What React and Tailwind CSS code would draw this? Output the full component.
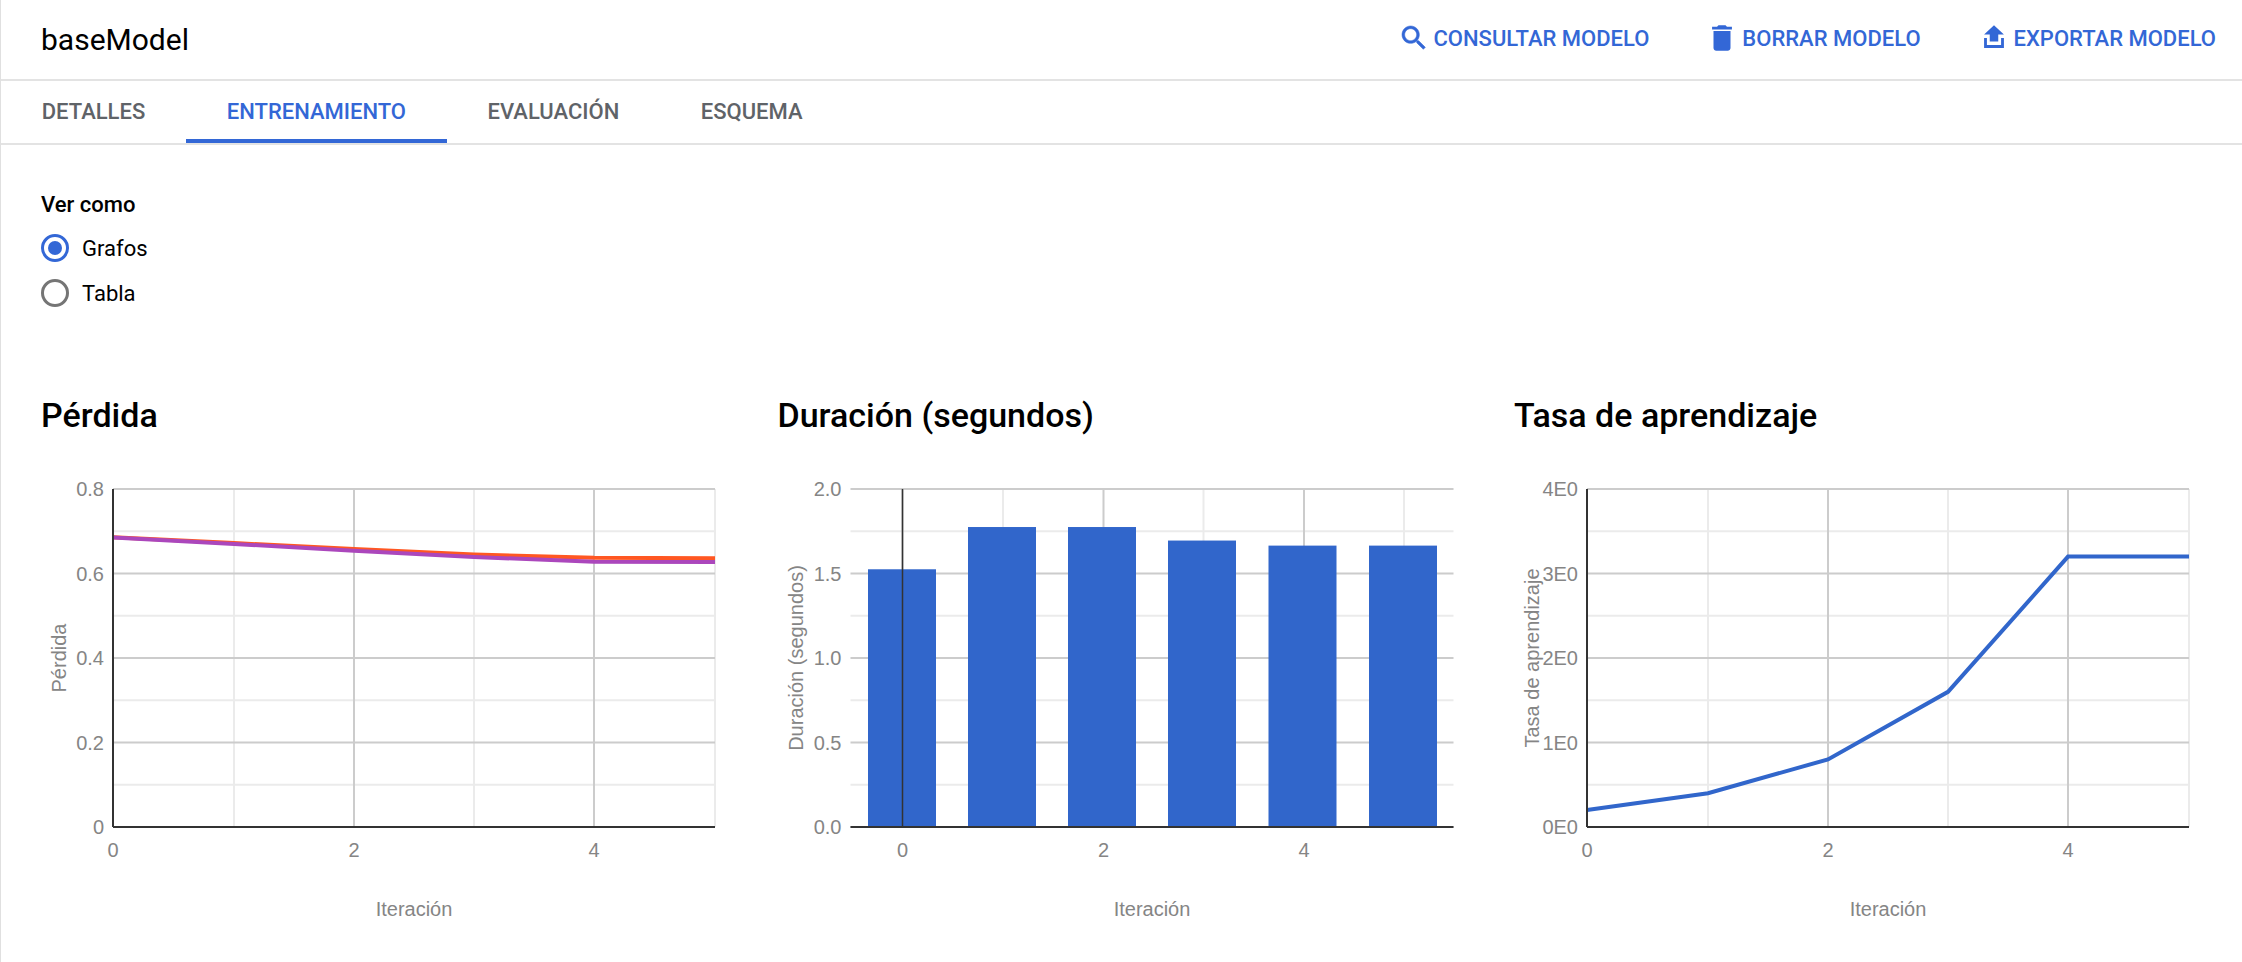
import React from "react";

const BLUE = "#3367d6";
const CHART_BLUE = "#3166cb";
const TICK = "#858585";

const TABS = ["DETALLES", "ENTRENAMIENTO", "EVALUACIÓN", "ESQUEMA"];

const ACTIONS = [
  {
    label: "CONSULTAR MODELO",
    d: "M15.5 14h-.79l-.28-.27C15.41 12.59 16 11.11 16 9.5 16 5.91 13.09 3 9.5 3S3 5.91 3 9.5 5.91 16 9.5 16c1.61 0 3.09-.59 4.23-1.57l.27.28v.79l5 4.99L20.49 19l-4.99-5zm-6 0C7.01 14 5 11.99 5 9.5S7.01 5 9.5 5 14 7.01 14 9.5 11.99 14 9.5 14z",
    bold: 0.4,
    size: 32,
  },
  {
    label: "BORRAR MODELO",
    d: "M6 19c0 1.1.9 2 2 2h8c1.1 0 2-.9 2-2V7H6v12zM19 4h-3.5l-1-1h-5l-1 1H5v2h14V4z",
    bold: 0,
    size: 34,
  },
  {
    label: "EXPORTAR MODELO",
    d: "M9 14.5h6v-5h4l-7-6.5-7 6.5h4zM5 12h2v5h10v-5h2v7H5z",
    bold: 0,
    size: 34,
  },
];

const HEIGHT = 338;
const yOf = (v, max) => HEIGHT - (v / max) * HEIGHT;

function Chart({ title, axisLabel, ticks, max, left, width, xTicks, minorX, band, lineSets, bars }) {
  const top = 16;
  const toY = (v) => top + yOf(v, max);
  const steps = ticks.length - 1;
  return (
    <div className="w-[736.5px] shrink-0">
      <h2 className="text-[34px] leading-[40px] font-medium text-black">{title}</h2>
      <svg width="720" height="478" className="mt-[38px] -ml-[41px] block" style={{ fontFamily: '"Liberation Sans", Arial, sans-serif' }}>
        {/* minor grid */}
        {Array.from({ length: steps }).map((_, i) => (
          <line key={i} x1={left} x2={left + width} y1={top + ((i + 0.5) * HEIGHT) / steps} y2={top + ((i + 0.5) * HEIGHT) / steps} stroke="#ebebeb" strokeWidth="2" />
        ))}
        {minorX.map((x) => (
          <line key={x} x1={x} x2={x} y1={top} y2={top + HEIGHT} stroke="#ebebeb" strokeWidth="2" />
        ))}
        {/* major grid */}
        {ticks.map((t, i) => (
          <line key={i} x1={left} x2={left + width} y1={top + (i * HEIGHT) / steps} y2={top + (i * HEIGHT) / steps} stroke="#cccccc" strokeWidth="2" />
        ))}
        {xTicks.map(([x]) => (
          <line key={x} x1={x} x2={x} y1={top} y2={top + HEIGHT} stroke="#cccccc" strokeWidth="2" />
        ))}
        {bars &&
          bars.map(([x, v]) => (
            <rect key={x} x={x} y={toY(v)} width="68" height={top + HEIGHT - toY(v)} fill={CHART_BLUE} />
          ))}
        {lineSets &&
          lineSets.map((l) => (
            <polyline key={l.color} points={l.points.map(([x, v]) => `${x},${toY(v)}`).join(" ")} fill="none" stroke={l.color} strokeWidth="4" />
          ))}
        {/* axes */}
        <line x1={band} x2={band} y1={top} y2={top + HEIGHT} stroke="#333333" strokeWidth={bars ? 1.5 : 2} />
        <line x1={left} x2={left + width} y1={top + HEIGHT} y2={top + HEIGHT} stroke="#333333" strokeWidth="2" />
        {/* labels */}
        {ticks.map((t, i) => (
          <text key={i} x={left - 9} y={top + (i * HEIGHT) / steps + 7} textAnchor="end" fontSize="20" fill={TICK}>
            {t}
          </text>
        ))}
        {xTicks.map(([x, t]) => (
          <text key={x} x={x} y={top + HEIGHT + 30} textAnchor="middle" fontSize="20" fill={TICK}>
            {t}
          </text>
        ))}
        <text x={left + width / 2} y={top + HEIGHT + 89} textAnchor="middle" fontSize="20" fill={TICK}>
          Iteración
        </text>
        <text transform={`translate(66,${top + HEIGHT / 2}) rotate(-90)`} textAnchor="middle" fontSize="20" fill={TICK}>
          {axisLabel}
        </text>
      </svg>
    </div>
  );
}

export default function App() {
  return (
    <div className="w-[2242px] h-[962px] overflow-hidden bg-white border-l border-[#e0e0e0] text-black" style={{ fontFamily: "Roboto, sans-serif" }}>
      {/* Header */}
      <header className="h-[81px] flex items-center justify-between pl-[40px] pr-[26px] border-b-2 border-[#e3e3e3]">
        <h1 className="text-[30px] font-normal">baseModel</h1>
        <div className="flex items-center gap-[56px] pb-[3px]">
          {ACTIONS.map((a) => (
            <button key={a.label} className="flex items-center gap-[3px] text-[22px] font-medium" style={{ color: BLUE }}>
              <svg viewBox="0 0 24 24" width={a.size} height={a.size} fill={BLUE} stroke={BLUE} strokeWidth={a.bold}>
                <path d={a.d} />
              </svg>
              {a.label}
            </button>
          ))}
        </div>
      </header>

      {/* Tabs */}
      <nav className="h-[64px] flex border-b-2 border-[#e3e3e3]">
        {TABS.map((t, i) => (
          <div
            key={t}
            className={`px-[40.75px] pt-[3px] flex items-center text-[22px] font-medium border-b-4 ${
              i === 1 ? "text-[#3367d6] border-[#3367d6]" : "text-[#5f6368] border-transparent"
            }`}
          >
            {t}
          </div>
        ))}
      </nav>

      <main className="pl-[40px] pt-[46px]">
        <div className="text-[22px] leading-[28px] font-medium">Ver como</div>
        <div className="mt-[15px] flex flex-col gap-[17px]">
          <label className="flex items-center gap-[13px] h-[28px] text-[22px]">
            <span className="w-[28px] h-[28px] rounded-full border-[3px] border-[#3367d6] flex items-center justify-center">
              <span className="w-[14px] h-[14px] rounded-full bg-[#3367d6]"></span>
            </span>
            Grafos
          </label>
          <label className="flex items-center gap-[13px] h-[28px] text-[22px]">
            <span className="w-[28px] h-[28px] rounded-full border-[3px] border-[#757575]"></span>
            Tabla
          </label>
        </div>

        <div className="mt-[88px] flex">
          <Chart
            title="Pérdida"
            axisLabel="Pérdida"
            ticks={["0.8", "0.6", "0.4", "0.2", "0"]}
            max={0.8}
            left={113}
            width={602}
            band={113}
            xTicks={[[113, "0"], [354, "2"], [594, "4"]]}
            minorX={[234, 474, 715]}
            lineSets={[
              { color: "#ff5722", points: [[113, 0.686], [234, 0.672], [354, 0.658], [474, 0.645], [594, 0.637], [715, 0.636]] },
              { color: "#ab47bc", points: [[113, 0.685], [234, 0.67], [354, 0.654], [474, 0.639], [594, 0.628], [715, 0.627]] },
            ]}
          />
          <Chart
            title="Duración (segundos)"
            axisLabel="Duración (segundos)"
            ticks={["2.0", "1.5", "1.0", "0.5", "0.0"]}
            max={2}
            left={113.5}
            width={603}
            band={165.5}
            xTicks={[[165.5, "0"], [366.5, "2"], [567, "4"]]}
            minorX={[266, 466.5, 667]}
            bars={[[131, 1.525], [231, 1.775], [331, 1.775], [431, 1.695], [531.5, 1.665], [632, 1.665]]}
          />
          <Chart
            title="Tasa de aprendizaje"
            axisLabel="Tasa de aprendizaje"
            ticks={["4E0", "3E0", "2E0", "1E0", "0E0"]}
            max={4}
            left={114}
            width={602}
            band={114}
            xTicks={[[114, "0"], [355, "2"], [595, "4"]]}
            minorX={[235, 475, 716]}
            lineSets={[
              { color: CHART_BLUE, points: [[114, 0.2], [235, 0.4], [355, 0.8], [475, 1.6], [595, 3.2], [716, 3.2]] },
            ]}
          />
        </div>
      </main>
    </div>
  );
}
